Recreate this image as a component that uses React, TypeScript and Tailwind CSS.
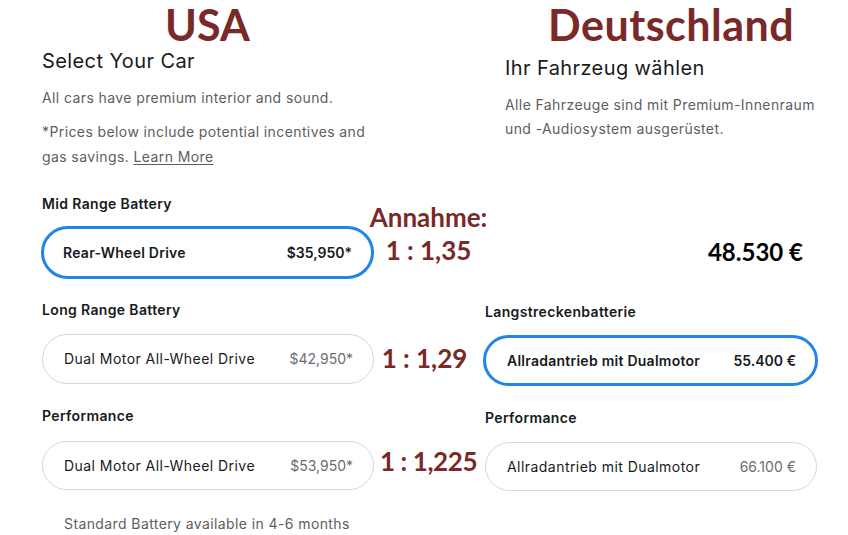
import React from "react";

const tesla = { fontFamily: "Inter, 'Noto Sans', sans-serif" };
const cal = { fontFamily: "Lato, 'Open Sans', sans-serif" };

function Card({
  label,
  price,
  selected,
  className,
}: {
  label: string;
  price: string;
  selected?: boolean;
  className?: string;
}) {
  return (
    <div
      className={
        "flex items-center justify-between rounded-full bg-white " +
        (selected
          ? "border-[3px] border-[#2185e8] pl-[19px] pr-[19px] font-semibold text-[#171a20] "
          : "border border-[#d6d7d9] pl-[21px] pr-[20px] text-[#171a20] ") +
        (className ?? "")
      }
    >
      <span
        className={
          "text-[14px] leading-[20px] " +
          (selected ? "tracking-[0.25px]" : "tracking-[0.45px]")
        }
      >
        {label}
      </span>
      <span
        className={
          "text-[14px] leading-[20px] tracking-normal " +
          (selected ? "text-[#171a20]" : "text-[#6b6d70]")
        }
      >
        {price}
      </span>
    </div>
  );
}

export default function App() {
  return (
    <div
      className="flex h-[535px] w-[848px] overflow-hidden bg-white tracking-[0.4px]"
      style={tesla}
    >
      {/* USA column */}
      <div className="ml-[41px] flex w-[333px] flex-col pt-[3px]">
        <div
          className="text-center text-[43px] font-bold leading-[43px] tracking-normal text-[#7a2929]"
          style={cal}
        >
          USA
        </div>
        <div className="mt-[3px] pl-[1px] text-[20px] leading-[24px] text-[#171a20]">
          Select Your Car
        </div>
        <div className="mt-[13px] pl-[1px] text-[14px] leading-[24px] text-[#5c5e62]">
          All cars have premium interior and sound.
        </div>
        <div className="mt-[9px] pl-[1px] text-[14px] leading-[25px] text-[#5c5e62]">
          *Prices below include potential incentives and
          <br />
          gas savings. <span className="underline underline-offset-2">Learn More</span>
        </div>
        <div className="mt-[25px] pl-[1px] text-[14px] font-semibold leading-[20px] tracking-[0.35px] text-[#171a20]">
          Mid Range Battery
        </div>
        <Card
          className="mt-[12px] h-[53px]"
          label="Rear-Wheel Drive"
          price="$35,950*"
          selected
        />
        <div className="mt-[21px] pl-[1px] text-[14px] font-semibold leading-[20px] tracking-[0.35px] text-[#171a20]">
          Long Range Battery
        </div>
        <Card
          className="ml-[1px] mt-[14px] h-[50px]"
          label="Dual Motor All-Wheel Drive"
          price="$42,950*"
        />
        <div className="mt-[22px] pl-[1px] text-[14px] font-semibold leading-[20px] tracking-[0.35px] text-[#171a20]">
          Performance
        </div>
        <Card
          className="ml-[1px] mt-[15px] h-[49px]"
          label="Dual Motor All-Wheel Drive"
          price="$53,950*"
        />
        <div className="mt-[24px] pl-[23px] text-[14px] leading-[20px] text-[#5c5e62]">
          Standard Battery available in 4-6 months
        </div>
      </div>

      {/* Annotations */}
      <div
        className="flex w-[109px] flex-col items-center pt-[204px] font-bold tracking-normal text-[#7a2929]"
        style={cal}
      >
        <div className="text-[26px] leading-[26px]">Annahme:</div>
        <div className="mt-[7px] text-[26px] leading-[26px]">1 : 1,35</div>
        <div className="mt-[82px] -translate-x-[4px] text-[26px] leading-[26px]">1 : 1,29</div>
        <div className="mt-[77px] text-[26px] leading-[26px] tracking-[-0.4px]">1 : 1,225</div>
      </div>

      {/* Deutschland column */}
      <div className="flex w-[335px] flex-col pt-[3px]">
        <div
          className="whitespace-nowrap pl-[65px] text-[43px] font-bold leading-[43px] tracking-[0.5px] text-[#7a2929]"
          style={cal}
        >
          Deutschland
        </div>
        <div className="mt-[10px] pl-[22px] text-[20px] leading-[24px] text-[#171a20]">
          Ihr Fahrzeug wählen
        </div>
        <div className="mt-[13px] pl-[22px] text-[14px] leading-[24px] text-[#5c5e62]">
          Alle Fahrzeuge sind mit Premium-Innenraum
          <br />
          und -Audiosystem ausgerüstet.
        </div>
        <div
          className="mt-[99px] pr-[15px] text-right text-[24px] font-bold leading-[24px] tracking-normal text-black"
          style={cal}
        >
          48.530 €
        </div>
        <div className="mt-[38px] pl-[2px] text-[14px] font-semibold leading-[20px] tracking-[0.35px] text-[#171a20]">
          Langstreckenbatterie
        </div>
        <Card
          className="mt-[13px] h-[51px] !pl-[21px] !pr-[19px]"
          label="Allradantrieb mit Dualmotor"
          price="55.400 €"
          selected
        />
        <div className="mt-[22px] pl-[2px] text-[14px] font-semibold leading-[20px] tracking-[0.35px] text-[#171a20]">
          Performance
        </div>
        <Card
          className="ml-[2px] mr-[1px] mt-[14px] h-[49px]"
          label="Allradantrieb mit Dualmotor"
          price="66.100 €"
        />
      </div>
    </div>
  );
}
